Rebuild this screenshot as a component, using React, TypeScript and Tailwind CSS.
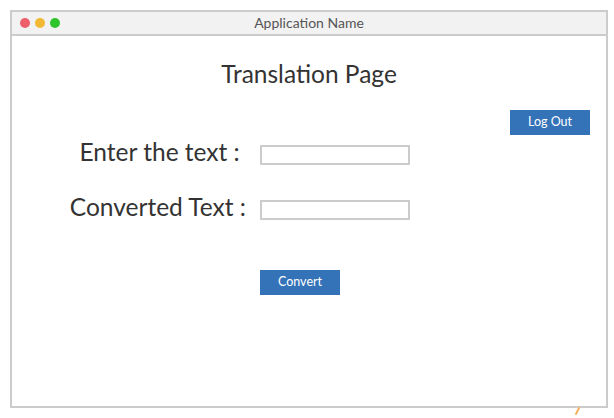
export default function App() {
  return (
    <div className="relative h-[418px] w-[614px] bg-white font-['Lato','Open_Sans',sans-serif] text-[#333]">
      <div className="absolute left-[10px] top-[10px] flex h-[398px] w-[598px] flex-col border-2 border-[#cccccc]">
        <div className="relative flex h-[24px] shrink-0 items-center justify-center border-b-2 border-[#cccccc] bg-[#f2f2f2]">
          <div className="absolute left-[8px] top-[6px] flex gap-[5px]">
            <span className="h-[10px] w-[10px] rounded-full bg-[#ec5f6b]" />
            <span className="h-[10px] w-[10px] rounded-full bg-[#f1b932]" />
            <span className="h-[10px] w-[10px] rounded-full bg-[#2fc42a]" />
          </div>
          <span className="text-[14px] leading-none text-[#555]">Application Name</span>
        </div>

        <div className="flex flex-1 flex-col">
          <h1 className="pt-[24px] text-center text-[24.5px] leading-[28px] text-[#333]">
            Translation Page
          </h1>

          <div className="mt-[22px] flex justify-end pr-[16px]">
            <button className="h-[25px] w-[80px] bg-[#3573b9] text-[12.5px] text-white">
              Log Out
            </button>
          </div>

          <div className="mt-[10px] grid grid-cols-[234px_150px] items-center gap-x-[14px] gap-y-[35px]">
            <label className="-mt-[6px] text-right text-[24.5px] leading-[20px] text-[#333]">
              Enter the text :&nbsp;
            </label>
            <input className="h-[20px] w-[150px] border-2 border-[#cccccc] bg-white outline-none" />
            <label className="-mt-[6px] text-right text-[24.5px] leading-[20px] text-[#333]">
              Converted Text :
            </label>
            <input className="h-[20px] w-[150px] border-2 border-[#cccccc] bg-white outline-none" />
          </div>

          <div className="mt-[48px] pl-[248px]">
            <button className="h-[25px] w-[80px] bg-[#3573b9] text-[12.5px] text-white">
              Convert
            </button>
          </div>
        </div>
      </div>
      <svg className="absolute left-[575px] top-[407px]" width="6" height="8" viewBox="0 0 6 8">
        <path d="M1 7 L4 1" stroke="#f5b362" strokeWidth="2" strokeLinecap="round" />
      </svg>
    </div>
  );
}
